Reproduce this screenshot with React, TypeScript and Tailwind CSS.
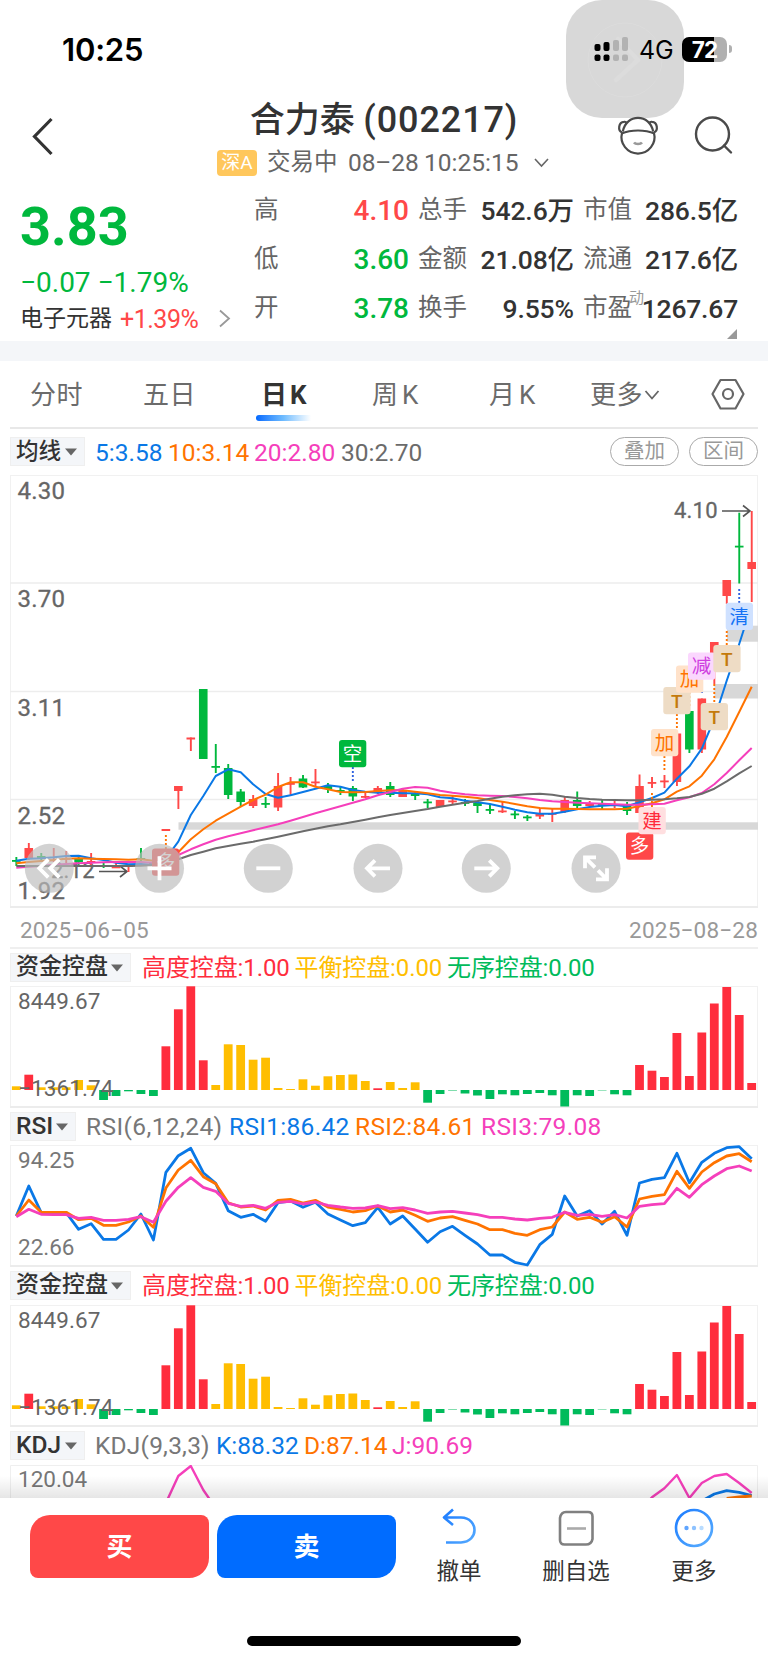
import type { ReactNode } from "react"

const FONT = "font-[Roboto,'Noto_Sans_CJK_SC',sans-serif]"

const RED = "#ff4848"
const GREEN = "#00b83d"
const BLUE = "#0a78e6"
const ORANGE = "#ff7300"
const PINK = "#f53fbb"
const GRAY = "#6b6b6b"

// x centre of the nth trading day
const px = (i: number) => 16.3 + 12.464 * i

// colour, high, body top, body bottom, low
type Candle = [string, number, number, number, number]

const candles: Candle[] = [
  ["g", 857, 860, 861.5, 866],
  ["r", 843, 848, 858, 860],
  ["g", 853, 856, 858, 861],
  ["r", 848, 859.5, 861, 862],
  ["r", 851, 858, 859.5, 863],
  ["g", 856, 858, 862, 866],
  ["r", 853, 861, 862.5, 867],
  ["g", 862, 865, 866.5, 868],
  ["r", 863, 866.5, 868, 868],
  ["r", 864, 865, 867, 872],
  ["g", 848, 858, 859.5, 862],
  ["g", 860, 862, 866, 867],
  ["r", 829, 829, 831, 831],
  ["r", 786, 786, 791, 809],
  ["r", 737.5, 737.5, 739.5, 751],
  ["g", 689, 689, 759, 759],
  ["g", 744, 766, 767.5, 773],
  ["g", 764, 768, 795, 799],
  ["g", 789, 791.5, 802, 807],
  ["r", 795, 799, 806, 808],
  ["g", 797, 803, 804.5, 808],
  ["r", 773, 786, 807.5, 811],
  ["r", 777, 783, 784.5, 795],
  ["g", 775, 778.5, 787.5, 788],
  ["r", 769, 781.5, 783, 786],
  ["g", 783, 786, 789, 793],
  ["g", 786, 790, 791, 795],
  ["g", 786, 788, 796.5, 801],
  ["r", 791, 796, 797.5, 798],
  ["r", 786, 788, 793, 794],
  ["g", 782, 786, 795, 797],
  ["r", 788, 790, 797, 797],
  ["g", 791, 793, 796, 800],
  ["g", 799, 801.5, 803, 808],
  ["r", 800, 800, 807, 807],
  ["r", 796, 800.5, 802, 804],
  ["g", 799, 802, 803.5, 806],
  ["g", 801, 803, 806, 813],
  ["g", 804, 809, 810.5, 814],
  ["r", 801, 810.5, 812, 813],
  ["g", 811, 813.5, 815, 819],
  ["g", 815, 816.5, 818, 821],
  ["r", 809, 814, 816.5, 819],
  ["r", 808, 813, 814, 822],
  ["r", 797, 800, 812, 813],
  ["g", 791.5, 800, 806, 808],
  ["r", 801, 803, 806, 807],
  ["g", 799, 804, 805, 810],
  ["r", 800, 804, 806, 808],
  ["g", 802, 805.5, 811, 815],
  ["r", 774.5, 786, 813, 813],
  ["r", 777, 782, 783.5, 788],
  ["r", 775, 780.5, 782, 788],
  ["r", 733.5, 733.5, 782, 786],
  ["g", 711, 711, 749.5, 753],
  ["r", 698.5, 698.5, 749.5, 753],
  ["r", 642, 642, 668, 684],
  ["r", 580, 580, 596, 604],
  ["g", 512.7, 545.7, 547.2, 583.5],
  ["r", 511, 562, 569, 602],
]

const ma5 = [860.7, 858.7, 858.3, 857.3, 856, 855.7, 858.3, 860, 862.7, 864.3, 864, 864.7, 858.3, 841.7, 815, 796, 776, 769.3, 772.3, 784.3, 794, 797.7, 795.3, 792, 788.7, 785.3, 786.7, 790, 791.7, 792.7, 792.7, 793.3, 793.3, 794.3, 797.3, 798.3, 800.7, 802.3, 804, 806.7, 809.7, 812.3, 813.7, 813.7, 811.7, 809.3, 807, 805.7, 805, 806.3, 802.3, 798, 792.7, 778.7, 766.3, 748.7, 719, 680.7, 644, 605]
const ma10 = [863.3, 862, 861, 860, 858.7, 858.3, 858.7, 859, 859.3, 859.7, 859.3, 860.7, 859.3, 852.3, 839.3, 829.3, 820.7, 813.7, 806.7, 800, 794.7, 787, 782.3, 782.3, 786.7, 789.3, 792, 792.3, 792, 791, 790.3, 790.3, 791.7, 793.3, 795, 795.7, 796.7, 798, 800, 801.7, 804, 806.3, 808, 808.7, 808.7, 809, 809.3, 809.3, 809.3, 808.7, 806, 803.3, 799.3, 791.7, 786.3, 775.7, 759.3, 737, 712, 686.7]
const ma20 = [867.7, 866.7, 866, 864.7, 864, 863.3, 862.7, 862.3, 862, 862, 862, 862.7, 860, 855, 849.3, 844.3, 839.7, 836.3, 833.3, 830.3, 827.3, 824.3, 820.7, 817, 813.3, 809.7, 806.3, 802.7, 799.3, 795.3, 792, 788.7, 787, 787.7, 790.7, 792.7, 794.3, 795.3, 795.7, 796, 797, 798.3, 800, 801.3, 802, 802.7, 803.3, 803.7, 804.3, 804.7, 804.7, 804.3, 803.7, 800.3, 797.3, 793, 784.3, 773, 760.3, 748]
const ma30 = [866, 866, 866, 866, 866, 866, 866, 866, 866, 866, 865.7, 865, 862, 859.3, 855, 851.7, 848.3, 846, 843.7, 841.7, 839.3, 836.7, 834, 831.3, 828.7, 826.3, 824.3, 822, 819.7, 817.3, 815, 813, 811, 809, 806.7, 804.7, 802.7, 801, 798.7, 796.7, 795.3, 794.3, 793.7, 794.7, 796.7, 798, 799, 799.7, 800, 800.3, 800.3, 799.7, 799.3, 798.3, 797, 793.7, 788.7, 781.3, 773.3, 766]

const rsi1 = [318, 228, 308, 308, 308, 358, 341, 388, 388, 360, 312, 390, 187, 137, 115, 188, 220, 302, 322, 313, 334, 278, 273, 292, 277, 312, 330, 347, 338, 292, 342, 318, 357, 397, 365, 349, 376, 402, 435, 435, 457, 465, 404, 373, 258, 318, 302, 342, 304, 376, 219, 208, 203, 130, 218, 157, 130, 113, 110, 146]
const rsi2 = [318, 270, 307, 307, 307, 329, 325, 346, 346, 336, 318, 352, 234, 180, 151, 200, 221, 278, 291, 288, 300, 271, 268, 279, 271, 291, 298, 306, 302, 288, 306, 300, 316, 334, 324, 320, 331, 342, 359, 359, 370, 376, 359, 351, 306, 328, 322, 337, 320, 351, 267, 259, 254, 184, 235, 186, 158, 138, 131, 155]
const rsi3 = [320, 298, 313, 314, 314, 325, 322, 331, 331, 328, 320, 337, 274, 232, 203, 232, 244, 280, 289, 286, 295, 277, 274, 282, 276, 286, 291, 295, 294, 287, 296, 293, 300, 310, 306, 304, 309, 314, 322, 322, 327, 330, 325, 322, 307, 316, 313, 319, 314, 324, 289, 284, 281, 235, 262, 224, 198, 176, 168, 183]

const fund = [3.7, 15.3, 2.7, 2.7, 2.7, 10, 4.7, -10, -6, -1.3, -4, -6, 43.7, 80.7, 103.7, 29.7, 5, 45.7, 45, 30.3, 32.3, 2, 1, 10.7, 4.3, 13.7, 15, 15.5, 9, 1.7, 8, 2, 7.7, -12.7, -4, -0.5, -3.5, -5.5, -9, -4.3, -5.3, -4, -3, -5.3, -16.5, -5.3, -6, -0.4, -4.3, -5.3, 25, 19.3, 13, 57, 14, 57.5, 86.5, 103, 75, 7]
const redDays = [1, 12, 13, 14, 15, 29]

const points = (ys: number[], from = 0) => ys.map((y, i) => `${px(i + from).toFixed(1)},${y}`).join(" ")
const rsiPoints = (ys: number[]) => points(ys.map((y) => +(y / 3 - 35).toFixed(1)))

function Line({ pts, color, w = 2 }: { pts: string; color: string; w?: number }) {
  return <polyline points={pts} fill="none" stroke={color} strokeWidth={w} strokeLinejoin="round" />
}

function Frame({ y, h }: { y: number; h: number }) {
  return (
    <g>
      <rect x="10.5" y={y + 0.5} width="747" height={h - 1.5} fill="none" stroke="#f1f1f1" />
      <path d={`M10 ${y + h - 1}H758`} stroke="#ececec" strokeWidth="2" />
    </g>
  )
}

function StatusBar() {
  return (
    <div className="relative flex h-[92px] items-start justify-between pl-[62px] pr-[36px]">
      <div className="absolute left-[566px] top-0 h-[118px] w-[118px] rounded-[36px] bg-[#d8d8d8]">
        <svg width="118" height="118" fill="none" stroke="#dcdcdc">
          <circle cx="59" cy="60" r="37" strokeWidth="1" />
          <path d="M50 80L72 60L52 39" strokeWidth="4.500" strokeLinecap="round" strokeLinejoin="round" />
        </svg>
      </div>
      <div className="relative mt-[34px] font-[Inter,sans-serif] text-[31px] font-semibold leading-[31px] tracking-[-0.2px] text-black">
        10:25
      </div>
      <div className="relative mt-[36px] flex h-[26px] items-center">
        <svg className="mr-[9px]" width="36" height="26">
          <g fill="#000">
            <rect x="0.5" y="8" width="6" height="7" rx="2" />
            <rect x="9.500" y="6" width="6" height="9" rx="2" />
            <rect x="0.5" y="18.500" width="6" height="6.500" rx="2" />
            <rect x="9.500" y="18.500" width="6" height="6.500" rx="2" />
          </g>
          <g fill="#b2b2b2">
            <rect x="19" y="4" width="6" height="11" rx="2" />
            <rect x="28" y="1" width="6" height="14" rx="2" />
            <rect x="19" y="18.500" width="6" height="6.500" rx="2" />
            <rect x="28" y="18.500" width="6" height="6.500" rx="2" />
          </g>
        </svg>
        <span className="w-[43px] pt-[2px] font-[Inter,sans-serif] text-[25px] leading-[26px] tracking-[-0.2px] text-black">4G</span>
        <div className="relative flex h-[25px] w-[45px] items-center justify-center overflow-hidden rounded-[7px] bg-[linear-gradient(90deg,#000_72%,#b0b0b0_72%)]">
          <span className="font-[Inter,sans-serif] text-[22.500px] font-bold leading-[25px] tracking-[-1px] text-white">72</span>
        </div>
        <div className="ml-[2px] h-[8px] w-[3px] rounded-r-full bg-[#b0b0b0]" />
      </div>
    </div>
  )
}

function TitleBar() {
  return (
    <div className="relative flex h-[92px] justify-between pl-[31px] pr-[33px]">
      <svg className="mt-[24px]" width="24" height="42" fill="none" stroke="#333" strokeWidth="3.2">
        <path d="M20.500 3L3.500 20.500L20.500 38" />
      </svg>
      <div className="absolute inset-x-0 top-[6px] flex flex-col items-center">
        <div className="whitespace-nowrap text-[35px] font-medium leading-[44px] text-[#333]">
          合力泰 <span className="text-[36px] tracking-[0.900px]">(002217)</span>
        </div>
        <div className="flex h-[40px] items-center whitespace-nowrap text-[#666]">
          <span className="flex h-[26px] w-[40px] items-center justify-center rounded-[4px] bg-[#ffc75c] text-[19px] leading-[26px] text-white">
            深A
          </span>
          <span className="ml-[10px] w-[81px] text-[23.500px]">交易中</span>
          <span className="w-[76px] text-[24.500px] tracking-[-0.1px]">08–28</span>
          <span className="w-[109px] text-[24.500px]">10:25:15</span>
          <svg width="18" height="14" fill="none" stroke="#666" strokeWidth="1.600">
            <path d="M2 3L8.500 10L15 3" />
          </svg>
        </div>
      </div>
      <div className="relative mt-[23px] flex">
        <svg className="mr-[34px]" width="44" height="44" fill="none" stroke="#4a4a4a" strokeWidth="2.200">
          <path d="M7.800 16.500C9.500 7.500 16 2.900 23 2.900S36.500 7.500 38.200 16.500" />
          <path d="M6.500 18.500C16 14.500 30 14.500 39.500 18.500" />
          <path d="M7 18A16.500 16.500 0 1 0 39 18" />
          <path d="M7 17.500C2.500 15.500 3.500 7 9 6.800Q11 6.500 12 8M39 17.500C43.500 15.500 42.500 7 37 6.800Q35 6.500 34 8" />
          <path d="M19 27.500C20.500 29.500 25.500 29.500 27 27.500" stroke="#999" strokeWidth="2.600" />
        </svg>
        <svg width="42" height="44" fill="none" stroke="#4a4a4a" strokeWidth="2.400">
          <circle cx="19.500" cy="19" r="16.500" />
          <path d="M31 30.500L38 37.500" strokeLinecap="round" />
        </svg>
      </div>
    </div>
  )
}

const stats = [
  ["高", "4.10", "text-[#ff4848]", "总手", "542.6万", "市值", "286.5亿"],
  ["低", "3.60", "text-[#00b83d]", "金额", "21.08亿", "流通", "217.6亿"],
  ["开", "3.78", "text-[#00b83d]", "换手", "9.55%", "市盈", "1267.67"],
]

function Quote() {
  return (
    <div className="relative flex h-[157px]">
      <div className="w-[254px] whitespace-nowrap pl-[20px] text-[#00b83d]">
        <div className="mt-[14px] text-[54px] font-bold leading-[58px]">3.83</div>
        <div className="mt-[10px] text-[28px] leading-[34px]">−0.07 −1.79%</div>
        <div className="mt-[3px] flex h-[32px] items-center">
          <span className="w-[100px] pt-[1px] text-[23px] text-[#333]">电子元器</span>
          <span className="w-[98px] pt-[2px] text-[25px] tracking-[-0.500px] text-[#ff4848]">+1.39%</span>
          <svg width="14" height="20" fill="none" stroke="#999" strokeWidth="1.800">
            <path d="M2 1.500L11 9.500L2 17.500" />
          </svg>
        </div>
      </div>
      <div className="flex flex-col pt-[2px]">
        {stats.map(([a, b, tone, c, d, e, f]) => (
          <div key={a} className="flex h-[49px] items-center whitespace-nowrap text-[24.500px] text-[#666]">
            <span className="w-[80px]">{a}</span>
            <span className={`w-[75px] text-right text-[28px] font-medium ${tone}`}>{b}</span>
            <span className="w-[58px] pl-[9px]">{c}</span>
            <span className="w-[107px] text-right text-[26.500px] font-medium tracking-[-0.1px] text-[#333]">{d}</span>
            <span className="w-[57px] pl-[9px]">{e}</span>
            <span className="w-[107px] text-right text-[26.500px] font-medium tracking-[-0.2px] text-[#333]">{f}</span>
          </div>
        ))}
      </div>
      <span className="absolute left-[629px] top-[106px] text-[15px] leading-[16px] text-[#999]">动</span>
      <svg className="absolute left-[727px] top-[145px]" width="10" height="10">
        <path d="M10 0V10H0Z" fill="#999" />
      </svg>
    </div>
  )
}

function Tabs() {
  return (
    <div className="mx-[10px] flex h-[68px] border-b-2 border-[#e8e8e8] pt-[14px] text-[26px] leading-[40px] text-[#6b6b6b]">
      <span className="w-[113px] pl-[20px] tracking-[0.500px]">分时</span>
      <span className="w-[119px] pl-[20px] tracking-[0.500px]">五日</span>
      <span className="flex w-[112px] flex-col pl-[14px]">
        <span className="pl-[5px] font-bold tracking-[3px] text-[#333]">日K</span>
        <span className="h-[6px] w-[55px] rounded-l-[3px] bg-gradient-to-r from-[#0068ff] via-[#6fbcff] to-white" />
      </span>
      <span className="w-[116px] pl-[18px] tracking-[4px]">周K</span>
      <span className="w-[100px] pl-[19px] tracking-[4px]">月K</span>
      <span className="flex w-[140px] items-center self-start pl-[20px] tracking-[0.500px]">
        更多
        <svg className="ml-[1px]" width="16" height="12" fill="none" stroke="#666" strokeWidth="1.800">
          <path d="M1.500 2L8 9.500L14.500 2" />
        </svg>
      </span>
      <svg className="mt-[2px]" width="36" height="34" fill="none" stroke="#666" strokeWidth="2.200">
        <path d="M10.500 3H25.500L33.500 17L25.500 31.500H10.500L2.500 17Z" strokeLinejoin="round" />
        <circle cx="18" cy="17" r="5" />
      </svg>
    </div>
  )
}

function Picker({ children, className }: { children: ReactNode; className: string }) {
  return (
    <div className={`flex h-[29px] items-center justify-between whitespace-nowrap border border-[#efefef] bg-[#f4f6f9] pl-[5px] pr-[7px] text-[#333] ${className}`}>
      {children}
      <svg width="12" height="8">
        <path d="M0 0.500H12L6 7.500Z" fill="#666" />
      </svg>
    </div>
  )
}

function MaRow() {
  return (
    <div className="flex h-[46px] items-start px-[10px] pt-[8px]">
      <Picker className="w-[75px] text-[22.500px] font-medium">均线</Picker>
      <div className="ml-[10px] flex h-[32px] items-center whitespace-nowrap text-[24.500px]">
        <span className="w-[73px] text-[#0a78e6]">5:3.58</span>
        <span className="w-[86px] text-[#ff7300]">10:3.14</span>
        <span className="w-[87px] text-[#f53fbb]">20:2.80</span>
        <span className="text-[#6b6b6b]">30:2.70</span>
      </div>
      <div className="ml-auto flex gap-[10px] text-[20.500px] leading-[27px] text-[#999]">
        <span className="h-[29px] w-[69px] rounded-full border border-[#aaa] text-center">叠加</span>
        <span className="h-[29px] w-[69px] rounded-full border border-[#aaa] text-center">区间</span>
      </div>
    </div>
  )
}

// x, y, text, background, text colour
const marks: [number, number, string, string, string][] = [
  [152, 848.5, "多", RED, "#fff"],
  [339, 740, "空", GREEN, "#fff"],
  [626, 832.5, "多", RED, "#fff"],
  [638.5, 807, "建", "#ffdfe0", "#ff2a3b"],
  [651, 729, "加", "#ffe2ca", ORANGE],
  [663.3, 687, "T", "#eedcc5", "#c47a0c"],
  [676, 665.5, "加", "#ffe2ca", ORANGE],
  [688, 652.5, "减", "#fbd7fe", "#cf3fe0"],
  [700.7, 703, "T", "#eedcc5", "#c47a0c"],
  [713.3, 645, "T", "#eedcc5", "#c47a0c"],
  [725.7, 602.7, "清", "#cfe1ff", "#1472f5"],
]

const leaders: [number, number, number, string][] = [
  [12, 835, 849, ORANGE],
  [27, 767, 781, "#2f62e0"],
  [51, 793, 807, ORANGE],
  [52, 756, 770, ORANGE],
  [53, 714, 728, ORANGE],
  [54, 692, 706, ORANGE],
  [55, 680, 693, "#2f62e0"],
  [56, 684, 703, ORANGE],
  [57, 631, 645, ORANGE],
  [58, 589, 603, "#2f62e0"],
]

const controls: [number, string][] = [
  [49.3, "M-1 -9L-10 0L-1 9M10 -9L1 0L10 9"],
  [159.5, "M-12 0H12M0 -12V12"],
  [268.3, "M-12 0H12"],
  [378, "M12 0H-10M-3 -8L-11 0L-3 8"],
  [486.3, "M-12 0H10M3 -8L11 0L3 8"],
  [596, "M-11 0V-11H0M-10 -10L-1 -1M11 0V11H0M10 10L2 2"],
]

function KChart() {
  return (
    <svg className="block h-[433px] w-[768px]" viewBox="0 475 768 433">
      <Frame y={475} h={433} />
      <path d="M10 583H758M10 691.500H758M10 799.500H758" stroke="#ededed" strokeWidth="1.300" />
      <g fill="#d8d8d8">
        <rect x="178.500" y="822.300" width="579.500" height="7.400" />
        <rect x="727" y="625.700" width="31" height="16" />
        <rect x="714.500" y="684" width="43.500" height="14.500" />
      </g>
      <g fill="#666" stroke="#666" strokeWidth="0.300" fontSize="24" letterSpacing="0.200">
        <text x="17.500" y="499">4.30</text>
        <text x="17.500" y="607">3.70</text>
        <text x="17.500" y="715.500">3.11</text>
        <text x="17.500" y="824">2.52</text>
        <text x="17.500" y="899">1.92</text>
        <text x="51" y="878" fontSize="22">2.12</text>
        <text x="674" y="517.700" fontSize="22">4.10</text>
      </g>
      <g fill="none" stroke="#555" strokeWidth="1.600">
        <path d="M99 871.500H126M120 866L127 871.500L120 877" />
        <path d="M722 511H750M743 505.500L750 511L743 516.500" />
      </g>
      {candles.map(([c, hi, top, bottom, lo], i) => (
        <g key={i} fill={c === "g" ? GREEN : RED}>
          <rect x={px(i) - 0.9} y={hi} width="1.900" height={lo - hi} />
          <rect x={px(i) - 4.3} y={top} width="8.600" height={Math.max(bottom - top, 1.8)} />
        </g>
      ))}
      <Line pts={points(ma5)} color={BLUE} w={2} />
      <Line pts={points(ma10)} color={ORANGE} w={2} />
      <Line pts={points(ma20)} color={PINK} w={2} />
      <Line pts={points(ma30)} color={GRAY} w={2} />
      {leaders.map(([i, y1, y2, c]) => (
        <path key={i} d={`M${px(i)} ${y1}V${y2}`} stroke={c} strokeWidth="1.900" strokeDasharray="2 2" />
      ))}
      {marks.map(([x, y, t, bg, fg], i) => (
        <g key={i}>
          <rect x={x} y={y} width="27.300" height="27.300" rx="3" fill={bg} />
          <text x={x + 13.6} y={y + (t === "T" ? 20.5 : 20.9)} fontSize={t === "T" ? 19 : 19.5} fontWeight={t === "T" ? 500 : 400} textAnchor="middle" fill={fg}>
            {t}
          </text>
        </g>
      ))}
      {controls.map(([x, d]) => (
        <g key={x} transform={`translate(${x} 868.300)`}>
          <circle r="24.500" fill="rgb(188,188,188)" fillOpacity="0.670" />
          <path d={d} fill="none" stroke="#fff" strokeWidth="3.800" />
        </g>
      ))}
    </svg>
  )
}

function FundPanel() {
  return (
    <svg className="block h-[122px] w-[768px]" viewBox="0 0 768 122">
      <Frame y={0} h={122} />
      {fund.map((v, i) => {
        const positive = i >= 50 || redDays.includes(i) ? "#ff2d3d" : "#ffbe00"
        return (
          <rect key={i} x={px(i) - 4.4} y={v > 0 ? 104 - v : 104} width="8.800" height={Math.abs(v)} fill={v > 0 ? positive : "#00bb5b"} />
        )
      })}
      <g fill="#666" fontSize="22.500" letterSpacing="0.100">
        <text x="18" y="22.500">8449.67</text>
        <text x="18" y="109.500">−1361.74</text>
      </g>
    </svg>
  )
}

function FundHeader({ className }: { className: string }) {
  return (
    <div className={`flex px-[10px] pt-[4px] ${className}`}>
      <Picker className="w-[121px] pl-[4px] text-[23px] font-medium">资金控盘</Picker>
      <div className="ml-[11px] flex h-[30px] items-center whitespace-nowrap text-[24px] tracking-[-0.1px]">
        <span className="w-[152.500px] text-[#ff2d3d]">高度控盘:1.00</span>
        <span className="w-[152.500px] text-[#ffbe00]">平衡控盘:0.00</span>
        <span className="text-[#00bb5b]">无序控盘:0.00</span>
      </div>
    </div>
  )
}

function RsiPanel() {
  return (
    <>
      <div className="flex h-[37px] px-[10px] pt-[4px]">
        <Picker className="w-[66px] text-[24.500px] font-medium">RSI</Picker>
        <div className="ml-[10px] flex h-[31px] items-center whitespace-nowrap text-[24.500px] tracking-[0.300px]">
          <span className="w-[143px] tracking-[0.400px] text-[#777]">RSI(6,12,24)</span>
          <span className="w-[126px] text-[#0a78e6]">RSI1:86.42</span>
          <span className="w-[126px] text-[#ff7300]">RSI2:84.61</span>
          <span className="text-[#f53fbb]">RSI3:79.08</span>
        </div>
      </div>
      <svg className="block h-[122px] w-[768px]" viewBox="0 0 768 122">
        <Frame y={0} h={122} />
        <g fill="#777" fontSize="22.500">
          <text x="18" y="23">94.25</text>
          <text x="18" y="110">22.66</text>
        </g>
        <Line pts={rsiPoints(rsi1)} color={BLUE} w={2.8} />
        <Line pts={rsiPoints(rsi2)} color={ORANGE} w={2.8} />
        <Line pts={rsiPoints(rsi3)} color={PINK} w={2.8} />
      </svg>
    </>
  )
}

function KdjPanel() {
  return (
    <>
      <div className="flex h-[38px] px-[10px] pt-[4px]">
        <Picker className="w-[75px] pl-[4px] text-[24.500px] font-medium">KDJ</Picker>
        <div className="ml-[10px] flex h-[31px] items-center whitespace-nowrap text-[24.500px]">
          <span className="w-[121px] tracking-[0.200px] text-[#777]">KDJ(9,3,3)</span>
          <span className="w-[88px] text-[#0a78e6]">K:88.32</span>
          <span className="w-[88px] text-[#ff7300]">D:87.14</span>
          <span className="text-[#f53fbb]">J:90.69</span>
        </div>
      </div>
      <div className="relative h-[33px]">
        <svg className="block h-[33px] w-[768px]" viewBox="0 0 768 33">
          <path d="M10.500 40V0.500H757.500V40" fill="none" stroke="#efefef" />
          <text x="18" y="22" fill="#777" fontSize="22.500">120.04</text>
          <Line pts={points([38, 11, 1, 25, 43], 12)} color={PINK} w={2.4} />
          <Line pts={points([46, 32.3, 23.3, 10, 33, 18, 11, 9, 18, 28], 50)} color={PINK} w={2.4} />
          <Line pts={points([36, 29, 25.7, 27.3, 30.5], 55)} color={BLUE} w={2.8} />
          <Line pts={points([33.5, 32, 31], 57)} color={ORANGE} w={3} />
        </svg>
        <div className="absolute inset-x-0 bottom-0 h-[22px] bg-gradient-to-b from-black/0 to-black/10" />
      </div>
    </>
  )
}

function BottomBar() {
  return (
    <div className="h-[165px] bg-white">
      <div className="flex h-[100px] pl-[30px] pt-[10px] text-[22.500px] text-[#333]">
        <div className="mt-[7px] h-[63px] w-[179px] rounded-[8px] rounded-br-[20px] rounded-tl-[20px] bg-[#ff4848] text-center text-[26px] font-bold leading-[65px] text-white">买</div>
        <div className="ml-[8px] mt-[7px] h-[63px] w-[179px] rounded-[8px] rounded-br-[20px] rounded-tl-[20px] bg-[#006cff] text-center text-[26px] font-bold leading-[65px] text-white">卖</div>
        <div className="ml-[13px] flex w-[100px] flex-col items-center">
          <svg width="40" height="44" fill="none" strokeWidth="2.600">
            <defs>
              <linearGradient id="blue" gradientUnits="userSpaceOnUse" x1="0" y1="0" x2="40" y2="40">
                <stop stopColor="#1677ff" />
                <stop offset="1" stopColor="#5cb0ff" />
              </linearGradient>
            </defs>
            <path d="M14 1.500L5 9.500L14 17M6 9.500H22C40 10 40 34 22 34.500H7" stroke="url(#blue)" strokeLinejoin="round" />
          </svg>
          <span className="mt-[3px] leading-[32px]">撤单</span>
        </div>
        <div className="flex w-[134px] flex-col items-center">
          <svg width="38" height="44" fill="none" stroke="#808080" strokeWidth="2.600">
            <path d="M9 4H31Q35.500 4 35.500 8.500V31Q34.500 36.500 29 36.500H7.500Q3 36.500 3 32V10Q4 4 9 4Z" />
            <path d="M10 20.500H29" stroke="#aaa" />
          </svg>
          <span className="mt-[3px] leading-[32px]">删自选</span>
        </div>
        <div className="ml-[4px] flex w-[94px] flex-col items-center">
          <svg width="44" height="44" fill="none">
            <circle cx="22" cy="20" r="18" stroke="url(#blue)" strokeWidth="2.600" />
            <circle cx="14.500" cy="20" r="2.200" fill="#5fa5ff" />
            <circle cx="22" cy="20" r="2.200" fill="#8dc2ff" />
            <circle cx="29.500" cy="20" r="2.200" fill="#b9dcff" />
          </svg>
          <span className="mt-[3px] leading-[32px]">更多</span>
        </div>
      </div>
      <div className="mx-auto mt-[38px] h-[10px] w-[274px] rounded-full bg-black" />
    </div>
  )
}

export default function App() {
  return (
    <div className={`h-[1663px] w-[768px] overflow-hidden bg-white ${FONT}`}>
      <StatusBar />
      <TitleBar />
      <Quote />
      <div className="h-[20px] bg-[#f4f6f9]" />
      <Tabs />
      <MaRow />
      <KChart />
      <div className="mx-[10px] flex h-[41px] items-center justify-between border-b-2 border-[#efefef] pl-[10px] pt-[6px] text-[22.500px] tracking-[0.200px] text-[#999]">
        <span>2025−06−05</span>
        <span>2025−08−28</span>
      </div>
      <FundHeader className="h-[37px]" />
      <FundPanel />
      <RsiPanel />
      <FundHeader className="h-[38px]" />
      <FundPanel />
      <KdjPanel />
      <BottomBar />
    </div>
  )
}
